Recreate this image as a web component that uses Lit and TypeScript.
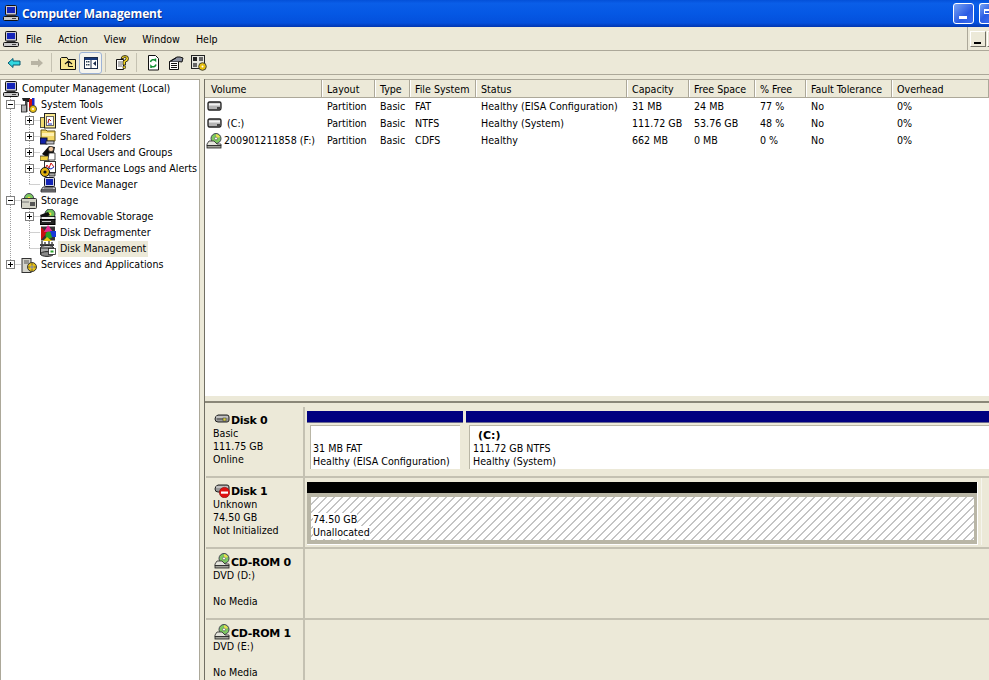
import { LitElement, html, css, svg } from "lit";
import { customElement } from "lit/decorators.js";

const ic = (body: unknown, s = 16) =>
  html`<svg class="ic" width=${s} height=${s} viewBox="0 0 16 16">${body}</svg>`;

const computer = svg`<rect x="2.5" y=".5" width="11" height="9.5" rx="1" fill="#c8c8d0" stroke="#111"/><rect x="4" y="2" width="8" height="6" fill="#1424b8"/><rect x="4" y="10" width="8" height="1" fill="#333"/><rect x=".5" y="11.5" width="15" height="4" rx="1" fill="#c8c8c8" stroke="#111"/><rect x="9" y="13" width="4" height="1" fill="#444"/>`;
const tools = svg`<rect x="4" y="1" width="2.500" height="14" fill="#444"/><path d="M1 1h8v4H6V4H2z" fill="#222"/><rect x="8" y="2" width="3" height="12" fill="#d01010"/><rect x="11" y="1" width="2.500" height="10" fill="#1828c8"/><circle cx="12" cy="12" r="3.500" fill="#f0c818" stroke="#443"/><circle cx="12" cy="12" r="1" fill="#fff"/><rect x=".5" y="8" width="5" height="7" fill="#b0b0b0" stroke="#222" stroke-width=".8"/>`;
const eventV = svg`<rect x=".5" y="4.5" width="4" height="10" fill="#f2dc70" stroke="#554"/><rect x="4.5" y=".5" width="11" height="14.500" fill="#f8e890" stroke="#222"/><rect x="6.5" y="3.5" width="7" height="9" fill="#fff" stroke="#666"/><path d="M8 10l1-4 2 2" stroke="#a01010" fill="none"/><path d="M8 11h4" stroke="#1828c0"/>`;
const shared = svg`<path d="M1 1h5l1 1h8v10H1z" fill="#f4d868" stroke="#665510"/><path d="M2 4h12v3H2z" fill="#fff0b0"/><rect x="0" y="9" width="7" height="6" fill="#1020a8" stroke="#112"/><rect x="6" y="12" width="8" height="3" fill="#c0c0c8" stroke="#222" stroke-width=".8"/>`;
const users = svg`<path d="M2 9L9 1l6 1-2 9H5z" fill="#0c0c0c"/><circle cx="11" cy="4" r="2.600" fill="#f0c8a0" stroke="#222" stroke-width=".6"/><rect x="0" y="11" width="9" height="4.500" fill="#f0d040" stroke="#333" stroke-width=".8"/><path d="M9 8h6v7H8z" fill="#fff" stroke="#222" stroke-width=".8"/>`;
const perf = svg`<rect x="4.5" y=".5" width="11" height="11" fill="#fff" stroke="#333"/><path d="M5 8l2-4 2 3 2-5 3 4" stroke="#d01818" fill="none"/><path d="M5 9l3-2 3 1 3-2" stroke="#1828c0" fill="none"/><circle cx="5" cy="11" r="4.500" fill="#e0b010" stroke="#111"/><circle cx="5" cy="11" r="1.600" fill="#111"/><path d="M9 12h6v3H9z" fill="#aaa" stroke="#222" stroke-width=".8"/>`;
const devmgr = svg`<rect x="4.5" y=".5" width="10" height="9" rx="1" fill="#d0d4e0" stroke="#112"/><rect x="6" y="2" width="7" height="6" fill="#1424b8"/><path d="M3 10h12l1 3H1z" fill="#c8c8d0" stroke="#222" stroke-width=".8"/><path d="M1 13h15v2H1z" fill="#8a8a90" stroke="#222" stroke-width=".8"/><path d="M4 11h9" stroke="#555"/>`;
const storage = svg`<circle cx="8" cy="5" r="4.500" fill="#7cc860" stroke="#445"/><circle cx="8" cy="5" r="1.300" fill="#ffe040"/><rect x=".5" y="5.500" width="15" height="10" rx="1" fill="#d4d4c8" stroke="#333"/><rect x="9" y="9" width="5" height="4" fill="#555"/><path d="M1 9h7" stroke="#777"/>`;
const removable = svg`<circle cx="10" cy="5" r="5" fill="#70c058" stroke="#334"/><circle cx="10" cy="5" r="1.400" fill="#ffe040"/><path d="M0 6l8-3 2 3-8 4z" fill="#111"/><rect x="1" y="7.500" width="14" height="3" fill="#eee" stroke="#000" stroke-width=".8"/><rect x="0" y="10.500" width="15" height="5" fill="#222" stroke="#000"/><path d="M2 12.500h9" stroke="#ccc"/>`;
const defrag = svg`<rect x="1" y="1.500" width="14" height="14" fill="#333"/><path d="M1 2l6 6-6 7z" fill="#c81010"/><path d="M8 0l5 7H4z" fill="#e82890"/><circle cx="9" cy="10" r="3.500" fill="#28a028"/><path d="M10 6h6v6h-4z" fill="#1838d8"/><path d="M7 12l5 4H3z" fill="#e8c810"/>`;
const diskMgmt = svg`<path d="M2 0v4M5 1v3M9 0v4M12 1v3" stroke="#222" stroke-width="1.200"/><path d="M0 3h14v2H0z" fill="#444"/><ellipse cx="7" cy="7" rx="6.500" ry="2.600" fill="#c8c8c8" stroke="#222"/><rect x=".5" y="7" width="13" height="6" fill="#aaa" stroke="#222"/><ellipse cx="7" cy="13" rx="6.500" ry="2.400" fill="#888" stroke="#222"/><rect x="8.500" y="7.500" width="7" height="6" fill="#fff" stroke="#222" stroke-width=".8"/><rect x="10.500" y="9.500" width="3" height="2" fill="#28a028"/>`;
const services = svg`<rect x="1" y="1.500" width="9" height="14" fill="#d4d4cc" stroke="#333"/><path d="M3 4h5M3 6h5" stroke="#555"/><circle cx="11" cy="10" r="4.500" fill="#e8c010" stroke="#333"/><circle cx="11" cy="10" r="1.600" fill="#fff"/><path d="M11 5v10M6 10h10" stroke="#554" stroke-width=".8"/>`;
const hdd = svg`<path d="M2 4.500Q2 3 3.500 3h10Q15 3 15 4.500v4.500Q15 11 13.500 11h-10Q2 11 2 9z" fill="#b4b4b4" stroke="#222" stroke-width="1.300"/><path d="M3 4.500h11v2H3z" fill="#f2f2f2"/><rect x="11" y="8" width="3" height="2" fill="#444"/>`;
const cd = svg`<circle cx="10" cy="5.500" r="5" fill="#7cc860" stroke="#445"/><path d="M10 1a5 5 0 0 1 4 3l-4 1.500z" fill="#e8e050"/><circle cx="10" cy="5.500" r="1.400" fill="#fff" stroke="#333" stroke-width=".5"/><path d="M3 8h5l3 3h4v1.500H1V11z" fill="#e4e4dc" stroke="#222" stroke-width=".8"/><rect x="1" y="12.500" width="14" height="2.500" fill="#a0a098" stroke="#222" stroke-width=".8"/>`;
const diskNet = svg`<path d="M1 8Q1 5 4 4h9q2 0 2 2v3q0 2-2 2H4Q1 11 1 8z" fill="#999" stroke="#222"/><path d="M2 6h12" stroke="#e8e8e8"/><path d="M3 8h8" stroke="#444"/><rect x="9" y="7" width="3" height="3" fill="#d8d040" stroke="#333" stroke-width=".5"/>`;
const diskErr = svg`<path d="M1 7Q1 4 4 3h9q2 0 2 2v3q0 2-2 2H4Q1 10 1 7z" fill="#999" stroke="#222"/><path d="M2 5h12" stroke="#e8e8e8"/><circle cx="10.500" cy="10.500" r="5.200" fill="#e01010" stroke="#801010" stroke-width=".6"/><rect x="7" y="9.500" width="7" height="2.200" fill="#fff"/>`;

const back = svg`<path d="M2 8l5-4.500V6h7v4H7v2.500z" fill="#30d8e0" stroke="#0a5a70"/>`;
const fwd = svg`<path d="M14 8L9 3.500V6H2v4h7v2.500z" fill="#b8b4a4"/>`;
const up = svg`<path d="M.5 3.500V14.500H15.500V4.500H8L7 2.500H1.500z" fill="#f6e48c" stroke="#111"/><path d="M5 9l3.500-3L12 9M8.500 6.500v5M8.500 11.500H13" stroke="#111" fill="none" stroke-width="1.200"/>`;
const tree = svg`<rect x="1.500" y="2.500" width="13" height="11" fill="#fff" stroke="#1a2a4a"/><rect x="2" y="3" width="12" height="2" fill="#1a3a7a"/><rect x="3" y="6" width="1.500" height="1.500" fill="#345"/><rect x="5" y="6" width="1.500" height="1.500" fill="#345"/><rect x="3" y="9" width="1.500" height="1.500" fill="#345"/><rect x="5" y="9" width="1.500" height="1.500" fill="#345"/><path d="M8 5v8" stroke="#1a2a4a"/><path d="M13 6v5l-3-2.500z" fill="#1a2a4a"/>`;
const help = svg`<path d="M2.500 4.500h7v10h-7z" fill="#fff" stroke="#111"/><path d="M4 7h4M4 9h4M4 11h4" stroke="#666"/><path d="M7 3.500Q7.500.500 11 .5q3.500 0 3.500 3t-3 3.500V10h-2.500V6q3-1 3-2.500t-1-1.500q-1 0-1.500 1.500z" fill="#f6d820" stroke="#111" stroke-width=".8"/><rect x="9" y="11" width="2.500" height="2.500" fill="#f6d820" stroke="#111" stroke-width=".6"/>`;
const refresh = svg`<path d="M3.500 .5h7l3 3v11.500h-10z" fill="#fff" stroke="#111"/><path d="M5.500 7a3 3 0 0 1 5-1.500V3.500M11 9.500a3 3 0 0 1-5 1.500v2" fill="none" stroke="#109030" stroke-width="1.500"/>`;
const props = svg`<path d="M1.500 6.500h9v8h-9z" fill="#fff" stroke="#111"/><path d="M3 8.500h6M3 10.500h6M3 12.500h6" stroke="#111"/><path d="M1.500 6.500L9 2h3l3 1-1 4-3.500-.5" fill="#8a90a0" stroke="#111"/><path d="M3 6l5-3" stroke="#111"/>`;
const settings = svg`<rect x=".5" y=".5" width="13" height="13" fill="#e8e8e0" stroke="#222"/><rect x="2" y="2" width="4" height="4" fill="#222"/><rect x="8" y="2" width="4" height="4" fill="#666"/><rect x="2" y="8" width="4" height="4" fill="#666"/><circle cx="11.500" cy="11.500" r="3.800" fill="#e8c010" stroke="#443"/><circle cx="11.500" cy="11.500" r="1" fill="#fff"/>`;

interface Node {
  label: string;
  level: number;
  icon: unknown;
  exp?: "+" | "-";
  trunk?: boolean;
  branch?: "mid" | "end";
  selected?: boolean;
}

const NODES: Node[] = [
  { label: "Computer Management (Local)", level: 0, icon: computer },
  { label: "System Tools", level: 1, icon: tools, exp: "-", trunk: true },
  { label: "Event Viewer", level: 2, icon: eventV, exp: "+", trunk: true, branch: "mid" },
  { label: "Shared Folders", level: 2, icon: shared, exp: "+", trunk: true, branch: "mid" },
  { label: "Local Users and Groups", level: 2, icon: users, exp: "+", trunk: true, branch: "mid" },
  { label: "Performance Logs and Alerts", level: 2, icon: perf, exp: "+", trunk: true, branch: "mid" },
  { label: "Device Manager", level: 2, icon: devmgr, trunk: true, branch: "end" },
  { label: "Storage", level: 1, icon: storage, exp: "-", trunk: true },
  { label: "Removable Storage", level: 2, icon: removable, exp: "+", trunk: true, branch: "mid" },
  { label: "Disk Defragmenter", level: 2, icon: defrag, trunk: true, branch: "mid" },
  { label: "Disk Management", level: 2, icon: diskMgmt, trunk: true, branch: "end", selected: true },
  { label: "Services and Applications", level: 1, icon: services, exp: "+" },
];

const COLS = ["Volume", "Layout", "Type", "File System", "Status", "Capacity", "Free Space", "% Free", "Fault Tolerance", "Overhead"];
const ROWS: [unknown, string[]][] = [
  [hdd, ["", "Partition", "Basic", "FAT", "Healthy (EISA Configuration)", "31 MB", "24 MB", "77 %", "No", "0%"]],
  [hdd, [" (C:)", "Partition", "Basic", "NTFS", "Healthy (System)", "111.72 GB", "53.76 GB", "48 %", "No", "0%"]],
  [cd, ["200901211858 (F:)", "Partition", "Basic", "CDFS", "Healthy", "662 MB", "0 MB", "0 %", "No", "0%"]],
];

@customElement("app-root")
export class AppRoot extends LitElement {
  static styles = css`
    :host { display: block; width: 989px; height: 680px; overflow: hidden; background: #ece9d8; font: 10.6px/13px "DejaVu Sans", sans-serif; font-stretch: condensed; color: #000; }
    * { box-sizing: border-box; }
    .ic { display: block; flex: none; }
    .win { height: 680px; display: flex; flex-direction: column; }
    .title { height: 27px; flex: none; display: flex; align-items: center; padding: 0 0 1px 3px; gap: 3px; background: linear-gradient(#0450d8 0, #0a5ee8 12%, #0558e4 50%, #0450dc 85%, #0236b0 100%); color: #fff; font: bold 12px "Open Sans", sans-serif; letter-spacing: -.15px; text-shadow: 1px 1px 0 #0a2a80; }
    .title .t { flex: 1; }
    .wbtn { width: 21px; height: 21px; border: 1px solid #fff; border-radius: 3px; background: linear-gradient(135deg, #7aa4f4, #2a5ce4 60%, #3a6cf0); flex: none; display: flex; align-items: flex-end; padding: 0 0 4px 5px; margin-right: 2px; }
    .wbtn i { display: block; width: 8px; height: 3px; background: #fff; }
    .wbtn.r { width: 10px; margin: 0; border-right: 0; border-radius: 3px 0 0 3px; padding: 5px 0 0 4px; align-items: flex-start; overflow: hidden; }
    .wbtn.r i { flex: none; width: 8px; height: 5px; background: none; border: 1px solid #fff; border-top-width: 2px; }
    .menu { height: 24px; flex: none; display: flex; align-items: center; padding-left: 3px; border-bottom: 1px solid #aca899; }
    .items { display: flex; margin-left: -1px; padding-top: 2px; flex: 1; height: 100%; align-items: center; }
    .items span { padding: 0 8px; }
    .mdi { width: 22px; height: 100%; border-left: 1px solid #aca899; flex: none; display: flex; align-items: center; padding-left: 2px; gap: 1px; overflow: hidden; }
    .mdibtn { width: 16px; height: 16px; background: #ece9d8; border: 1px solid; border-color: #fff #716f64 #716f64 #fff; display: flex; align-items: flex-end; padding: 0 0 2px 3px; flex: none; }
    .mdibtn i { width: 7px; height: 2px; background: #000; display: block; }
    .bar { height: 24px; flex: none; display: flex; align-items: center; padding-left: 2px; border-bottom: 1px solid #aca899; }
    .b { width: 23px; height: 22px; display: flex; align-items: center; justify-content: center; flex: none; }
    .b.on { background: #f5f4ee; border: 1px solid #9db3d6; border-radius: 3px; }
    .sep { width: 1px; height: 19px; background: #c5c2b2; margin: 0 4px 0 3px; flex: none; }
    .main { flex: 1; min-height: 0; display: flex; padding-top: 4px; }
    .tree { width: 200px; flex: none; background: #fff; border: solid #aca899; border-width: 1px 1px 0 0; box-shadow: inset 1px 0 0 #aca899; padding-top: 1px; overflow: hidden; }
    .row { height: 16px; display: flex; align-items: center; white-space: nowrap; }
    .guides { flex: none; display: block; }
    .lbl { padding: 0 2px; height: 16px; line-height: 15px; margin-left: 2px; }
    .l0 .lbl { margin-left: 1px; }
    .sel { background: #ece9d8; }
    .l0 .ic { margin-left: 3px; }
    .gutter { width: 4px; flex: none; }
    .right { flex: 1; min-width: 0; display: flex; flex-direction: column; border-left: 1px solid #716f64; }
    .list { height: 316px; flex: none; background: #fff; display: flex; flex-direction: column; overflow: hidden; border-top: 1px solid #aca899; }
    .grid { display: grid; grid-template-columns: 117px 53px 35px 66px 151px 62px 66px 51px 86px 97px; white-space: nowrap; }
    .head { height: 18px; flex: none; background: #ece9d8; border-bottom: 1px solid #aca899; }
    .head div { padding: 3px 0 0 5px; border-right: 1px solid #aca899; box-shadow: 1px 0 0 #fff; height: 17px; }
    .head div:first-child { padding-left: 6px; }
    .cells { height: 17px; align-items: center; }
    .cells div { padding-left: 5px; height: 17px; line-height: 17px; overflow: hidden; }
    .cells .v { display: flex; gap: 2px; padding-left: 1px; align-items: center; white-space: pre; }
    .split { height: 12px; flex: none; border-top: 1px solid #fff; }
    .split::after { content: ""; display: block; margin-top: 5px; height: 2px; background: #8a8778; }
    .disks { flex: 1; min-height: 0; overflow: hidden; padding-left: 1px; }
    .disk { display: grid; grid-template-columns: 99px 1fr; height: 71px; border-bottom: 2px solid #c4c1b2; }
    .info { padding: 8px 0 0 7px; border-right: 2px solid #c4c1b2; }
    .name { display: flex; font-weight: 700; align-items: flex-end; height: 12px; font-size: 11px; font-stretch: normal; letter-spacing: -.3px; white-space: nowrap; }
    .name .ic { margin: -3px 1px 0 1px; }
    .vis { padding: 4px 0 0 2px; display: flex; min-width: 0; overflow: hidden; }
    .part { width: 156px; flex: none; margin-right: 3px; }
    .part.big { flex: none; width: 600px; margin-right: 0; }
    .cap { height: 12px; background: #000080; border-bottom: 1px solid #6a6a90; }
    .body { margin: 2px 3px 0 3px; height: 44px; background: #fff; border: solid #b9b6a6; border-width: 1px 0 0 1px; padding: 16px 0 0 2px; white-space: nowrap; }
    .big .body { padding: 4px 0 0 3px; margin-right: 0; }
    .big b { display: block; line-height: 12px; padding-left: 5px; font-size: 11px; font-stretch: normal; }
    .unrow { width: 675px; flex: none; border-right: 1px solid #f6f5ee; height: 67px; margin-top: -4px; padding-top: 4px; }
    .un { width: 671px; border: solid #fff; border-width: 0 1px 1px 0; height: 63px; }
    .un .cap { background: #000; border: 0; height: 11px; }
    .hatch { height: 51px; border: 4px solid #b9b6a6; border-right-width: 3px; background: repeating-linear-gradient(135deg, #fff 0 4.660px, #c4c4c4 4.660px 5.660px); padding: 16px 0 0 2px; white-space: nowrap; }
    .hatch span { background: #fff; display: table; }
  `;

  private guides(n: Node) {
    if (n.level === 0) return null;
    const w = n.level === 1 ? 21 : 40;
    const v = (x: number, y1: number, y2: number) =>
      svg`<line x1=${x} x2=${x} y1=${y1} y2=${y2} stroke="#a0a0a0" stroke-dasharray="1 1"/>`;
    const h = (x1: number, x2: number) =>
      svg`<line x1=${x1} x2=${x2} y1="7.500" y2="7.500" stroke="#a0a0a0" stroke-dasharray="1 1"/>`;
    const box = (cx: number, kind: string) => svg`
      <rect x=${cx - 4} y="3.500" width="8" height="8" fill="#fff" stroke="#808080"/>
      <path d=${kind === "+" ? `M${cx - 2.5} 7.500h5M${cx} 5v5` : `M${cx - 2.5} 7.500h5`} stroke="#000"/>`;
    const exX = n.level === 1 ? 10.5 : 29.5;
    return html`<svg class="guides" width=${w} height="16" viewBox="0 0 ${w} 16">
      ${n.trunk ? v(10.5, 0, 16) : v(10.5, 0, 8)}
      ${n.level === 2 ? v(29.5, 0, n.branch === "end" ? 8 : 16) : null}
      ${h(exX, w)}
      ${n.exp ? box(exX, n.exp) : null}
    </svg>`;
  }

  private diskInfo(icon: unknown, name: string, lines: string[]) {
    return html`<div class="info">
      <div class="name">${ic(icon)}${name}</div>
      ${lines.map((l) => html`<div class="ln">${l || html`&nbsp;`}</div>`)}
    </div>`;
  }

  render() {
    return html`<div class="win">
      <div class="title">${ic(computer)}<span class="t">Computer Management</span>
        <div class="wbtn"><i></i></div><div class="wbtn r"><i></i></div></div>
      <div class="menu">${ic(computer)}
        <div class="items">${["File", "Action", "View", "Window", "Help"].map((m) => html`<span>${m}</span>`)}</div>
        <div class="mdi"><div class="mdibtn"><i></i></div><div class="mdibtn"></div></div>
      </div>
      <div class="bar">
        <div class="b">${ic(back)}</div><div class="b">${ic(fwd)}</div><div class="sep"></div>
        <div class="b">${ic(up)}</div><div class="b on">${ic(tree)}</div><div class="sep"></div>
        <div class="b">${ic(help)}</div><div class="sep"></div>
        <div class="b">${ic(refresh)}</div><div class="b">${ic(props)}</div><div class="b">${ic(settings)}</div>
      </div>
      <div class="main">
        <div class="tree">
          ${NODES.map((n) => html`<div class="row l${n.level}">${this.guides(n)}${ic(n.icon)}<span class="lbl ${n.selected ? "sel" : ""}">${n.label}</span></div>`)}
        </div>
        <div class="gutter"></div>
        <div class="right">
          <div class="list">
            <div class="grid head">${COLS.map((c) => html`<div>${c}</div>`)}</div>
            ${ROWS.map(([icon, r]) => html`<div class="grid cells">${r.map((c, i) => i === 0 ? html`<div class="v">${ic(icon)}${c}</div>` : html`<div>${c}</div>`)}</div>`)}
          </div>
          <div class="split"></div>
          <div class="disks">
            <div class="disk">
              ${this.diskInfo(diskNet, "Disk 0", ["Basic", "111.75 GB", "Online"])}
              <div class="vis">
                <div class="part"><div class="cap"></div><div class="body">31 MB FAT<br />Healthy (EISA Configuration)</div></div>
                <div class="part big"><div class="cap"></div><div class="body"><b>(C:)</b>111.72 GB NTFS<br />Healthy (System)</div></div>
              </div>
            </div>
            <div class="disk">
              ${this.diskInfo(diskErr, "Disk 1", ["Unknown", "74.50 GB", "Not Initialized"])}
              <div class="vis"><div class="unrow"><div class="un"><div class="cap"></div><div class="hatch"><span>74.50 GB</span><span>Unallocated</span></div></div></div></div>
            </div>
            <div class="disk">
              ${this.diskInfo(cd, "CD-ROM 0", ["DVD (D:)", "", "No Media"])}
              <div class="vis"></div>
            </div>
            <div class="disk">
              ${this.diskInfo(cd, "CD-ROM 1", ["DVD (E:)", "", "No Media"])}
              <div class="vis"></div>
            </div>
          </div>
        </div>
      </div>
    </div>`;
  }
}
